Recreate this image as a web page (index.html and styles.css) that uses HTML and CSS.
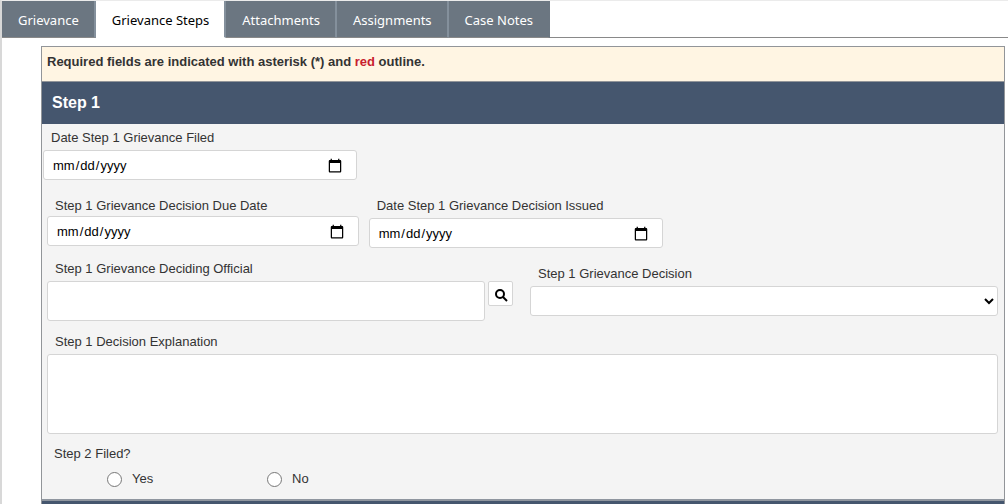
FILE: index.html
```
<!DOCTYPE html>
<html lang="en">
<head>
<meta charset="utf-8">
<title>Grievance Steps</title>
<link rel="stylesheet" href="styles.css">
</head>
<body>
<div class="page">
  <nav class="tabs">
    <button type="button" class="tab">Grievance</button>
    <button type="button" class="tab tab-active" aria-current="page">Grievance Steps</button>
    <button type="button" class="tab">Attachments</button>
    <button type="button" class="tab">Assignments</button>
    <button type="button" class="tab">Case Notes</button>
  </nav>
  <main class="panel">
    <p class="notice">Required fields are indicated with asterisk (*) and <span class="required">red</span> outline.</p>
    <h2 class="section-title">Step 1</h2>
    <form class="section-body">
      <div class="row row-filed">
        <div class="field">
          <label for="filed">Date Step 1 Grievance Filed</label>
          <input class="control date" type="date" id="filed">
        </div>
      </div>
      <div class="row row-dates">
        <div class="field field-tight">
          <label for="due">Step 1 Grievance Decision Due Date</label>
          <input class="control date" type="date" id="due">
        </div>
        <div class="field">
          <label for="issued">Date Step 1 Grievance Decision Issued</label>
          <input class="control date" type="date" id="issued">
        </div>
      </div>
      <div class="row row-decision">
        <div class="field">
          <label for="official">Step 1 Grievance Deciding Official</label>
          <div class="lookup">
            <input class="control official" type="text" id="official">
            <button type="button" class="search" aria-label="Search">
              <svg width="14" height="14" viewBox="0 0 14 14" fill="none" stroke="#000" stroke-width="2"><circle cx="6" cy="6" r="4"/><path d="M9 9l4 4"/></svg>
            </button>
          </div>
        </div>
        <div class="field field-decision">
          <label for="decision">Step 1 Grievance Decision</label>
          <select class="control decision" id="decision"><option></option></select>
        </div>
      </div>
      <div class="row">
        <div class="field">
          <label for="explanation">Step 1 Decision Explanation</label>
          <textarea class="control explanation" id="explanation"></textarea>
        </div>
      </div>
      <fieldset class="filed">
        <legend>Step 2 Filed?</legend>
        <div class="choices">
          <label class="choice"><input type="radio" name="step2">Yes</label>
          <label class="choice"><input type="radio" name="step2">No</label>
        </div>
      </fieldset>
    </form>
    <div class="next-section"></div>
  </main>
</div>
</body>
</html>
```
FILE: styles.css
```
* { box-sizing: border-box; }
html { overflow: hidden; }
body {
  margin: 0;
  background: #fff;
  color: #333;
  font: 13px/16px "Liberation Sans", Arial, sans-serif;
}
.page {
  min-height: 100vh;
  border-top: 1px solid #ebebeb;
  border-left: 2px solid #d8d8d8;
}
.tabs {
  display: flex;
  height: 37px;
  border-bottom: 1px solid #898989;
}
.tab {
  height: 37px;
  padding: 2px 15px 0 16px;
  border: 0;
  border-right: 2px solid #84909c;
  border-bottom: 1px solid #898989;
  background: #6b7681;
  color: #fff;
  font: 13px/20px "Noto Sans", "Open Sans", sans-serif;
}
.tab:last-child { border-right-color: #6b7681; }
.tab-active {
  background: #fff;
  border-bottom-color: #fff;
  color: #000;
}
.panel {
  margin: 8px 3px 0 39px;
  border: 1px solid #929599;
  border-bottom: 0;
}
.notice {
  margin: 0;
  padding: 7px 5px 11px;
  border-bottom: 1px solid #929599;
  background: #fff5e3;
  font-weight: bold;
}
.required { color: #c8202f; }
.section-title {
  margin: 0;
  padding: 11px 10px;
  background: #45566e;
  color: #fff;
  font-size: 16px;
  line-height: 20px;
}
.section-body {
  padding: 6px 6px 12px 5px;
  background: #f4f4f4;
}
.row {
  display: grid;
  margin-bottom: 13px;
}
.row-filed {
  grid-template-columns: 314fr 641fr;
  margin: 0 0 18px -4px;
}
.row-dates {
  grid-template-columns: 312fr 295fr 325fr;
  gap: 10px;
}
.row-decision {
  grid-template-columns: 466fr 468fr;
  gap: 17px;
}
.field {
  display: flex;
  flex-direction: column;
  gap: 4px;
}
.field-tight { gap: 2px; }
.field > label { padding-left: 8px; }
.field-decision { padding-top: 5px; }
.control {
  width: 100%;
  margin: 0;
  border: 1px solid #d5d5d5;
  border-radius: 3px;
  background: #fff;
  color: #000;
  font: 13px/16px "Liberation Sans", Arial, sans-serif;
}
.date {
  height: 30px;
  padding: 1px 11px 0 8px;
}
.date::-webkit-calendar-picker-indicator {
  width: 16px;
  height: 16px;
}
.lookup {
  display: flex;
  align-items: flex-start;
  gap: 3px;
}
.official {
  flex: 1;
  height: 40px;
  padding: 0 8px;
}
.search {
  display: flex;
  align-items: center;
  justify-content: center;
  width: 25px;
  height: 25px;
  padding: 3px 0 0;
  border: 1px solid #d5d5d5;
  border-radius: 2px;
  background: #fff;
}
.decision { height: 30px; }
.explanation {
  display: block;
  height: 80px;
  padding: 8px;
  resize: none;
}
.filed {
  margin: 0;
  margin-top: -1px;
  padding: 0;
  border: 0;
}
.filed legend {
  padding: 0 7px;
}
.choices {
  display: flex;
  padding: 8px 0 0 60px;
}
.choice {
  display: flex;
  align-items: center;
  gap: 10px;
  width: 160px;
}
.choice input {
  width: 15px;
  height: 15px;
  margin: 2px 0 0;
}
.next-section {
  height: 5px;
  border-top: 2px solid #8f969f;
  background: #45566e;
}
```
